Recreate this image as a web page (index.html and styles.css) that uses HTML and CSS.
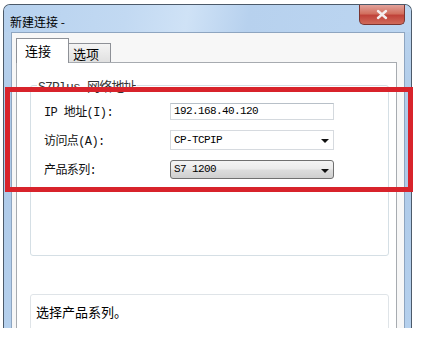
FILE: index.html
```html
<!DOCTYPE html>
<html lang="zh-CN">
<head>
    <meta charset="UTF-8">
    <meta name="viewport" content="width=device-width, initial-scale=1.0">
    <title>新建连接</title>
    <link rel="stylesheet" href="styles.css">
</head>
<body>
    <div class="window">
        <div class="titlebar">
            <span class="title">新建连接 -</span>
            <div class="close-btn">
                <svg width="14" height="11" viewBox="0 0 14 11">
                    <path d="M3 2 L11 9 M11 2 L3 9" stroke="#f4eeee" stroke-width="2.4" stroke-linecap="round"/>
                </svg>
            </div>
        </div>
        <div class="client">
            <div class="tabs">
                <div class="tab active">连接</div>
                <div class="tab">选项</div>
            </div>
            <div class="panel">
                <div class="group">
                    <span class="legend">S7Plus 网络地址</span>
                    <div class="row">
                        <label class="label">IP 地址(I):</label>
                        <div class="field input">192.168.40.120</div>
                    </div>
                    <div class="row">
                        <label class="label">访问点(A):</label>
                        <div class="field select">CP-TCPIP<span class="arrow"></span></div>
                    </div>
                    <div class="row">
                        <label class="label">产品系列:</label>
                        <div class="field select combo">S7 1200<span class="arrow"></span></div>
                    </div>
                </div>
                <div class="desc">选择产品系列。</div>
            </div>
        </div>
    </div>
    <div class="highlight"></div>
</body>
</html>
```

FILE: styles.css
```css
body {
    margin: 0;
    background: #ffffff;
    font-family: "Noto Sans CJK SC", sans-serif;
    font-size: 12px;
    color: #000;
}
.window {
    margin: 4px 0 0 3px;
    width: 407px;
    height: 323px;
    border: 1px solid #4c5a6a;
    border-bottom: none;
    border-radius: 7px 7px 0 0;
    background: linear-gradient(to bottom, #bcd5ef, #adc9e8 40%, #b5d0ed);
    overflow: hidden;
    position: relative;
}
.titlebar {
    height: 27px;
    display: flex;
    align-items: center;
    padding-left: 6px;
    background: linear-gradient(100deg, #b6d1ee 0%, #c2d9f2 30%, #cfe2f6 45%, #b7d1ee 60%, #bcd6f1 100%);
}
.title {
    font-size: 12px;
    margin-top: 6px;
}
.close-btn {
    position: absolute;
    top: 0;
    right: 6px;
    width: 44px;
    height: 19px;
    border: 1px solid #7a3530;
    border-top: none;
    border-radius: 0 0 5px 5px;
    background: linear-gradient(to bottom, #e2a29b 0%, #d2705f 45%, #c0433a 55%, #d06a5a 100%);
    display: flex;
    align-items: center;
    justify-content: center;
}
.client {
    margin: 0 6px 0 7px;
    height: 300px;
    border: 1px solid #8ea5c0;
    border-bottom: none;
    background: #f7f7f7;
}
.tabs {
    display: flex;
    align-items: flex-end;
    padding: 5px 0 0 4px;
    height: 24px;
}
.tab {
    height: 18px;
    padding: 0 0 0 4px;
    width: 37px;
    border: 1px solid #8e9197;
    border-bottom: none;
    border-left: none;
    background: linear-gradient(to bottom, #f4f4f4, #e0e0e0);
    font-size: 13px;
    line-height: 20px;
}
.tab.active {
    height: 24px;
    width: 43px;
    padding-left: 8px;
    border-left: 1px solid #8e9197;
    background: #ffffff;
    position: relative;
    margin-bottom: -1px;
    line-height: 24px;
}
.panel {
    margin: 0 7px 0 4px;
    height: 300px;
    border: 1px solid #a7abb0;
    background: #ffffff;
    padding: 0 0 0 13px;
}
.group {
    position: relative;
    margin-top: 22px;
    width: 359px;
    height: 171px;
    box-sizing: border-box;
    border: 1px solid #d5dfe5;
    border-radius: 3px;
    padding: 15px 0 0 13px;
    display: flex;
    flex-direction: column;
    gap: 9px;
}
.legend {
    position: absolute;
    top: -10px;
    left: 6px;
    padding: 0 1px;
    background: #ffffff;
    font-family: "Liberation Mono", "Noto Sans CJK SC", monospace;
    font-size: 13px;
    letter-spacing: -0.8px;
    color: #333;
}
.row {
    display: flex;
    align-items: center;
    height: 20px;
}
.label {
    width: 126px;
    font-family: "Liberation Mono", "Noto Sans CJK SC", monospace;
    letter-spacing: -0.6px;
    font-size: 12px;
    color: #111;
}
.field {
    box-sizing: border-box;
    width: 164px;
    font-family: "Liberation Mono", "Noto Sans CJK SC", monospace;
    font-size: 11px;
    letter-spacing: -0.6px;
    padding-left: 3px;
    display: flex;
    align-items: center;
    position: relative;
}
.input {
    height: 17px;
    border: 1px solid #d4d9de;
    border-top-color: #b8c0c8;
}
.select {
    height: 20px;
    border: 1px solid #d6dadf;
}
.combo {
    height: 19px;
    border: 1px solid #707070;
    border-radius: 3px;
    background: linear-gradient(to bottom, #f4f4f4 0%, #ebebeb 48%, #dddddd 52%, #cfcfcf 100%);
}
.arrow {
    position: absolute;
    right: 4px;
    top: 8px;
    width: 0;
    height: 0;
    border-left: 4px solid transparent;
    border-right: 4px solid transparent;
    border-top: 4px solid #111;
}
.desc {
    margin-top: 38px;
    width: 359px;
    height: 60px;
    box-sizing: border-box;
    border: 1px solid #dfe4e8;
    border-radius: 3px;
    padding: 9px 0 0 5px;
    font-size: 13px;
    line-height: 16px;
}
.highlight {
    position: absolute;
    left: 5px;
    top: 87px;
    width: 398px;
    height: 95px;
    border: 5px solid #d8232b;
}
```
